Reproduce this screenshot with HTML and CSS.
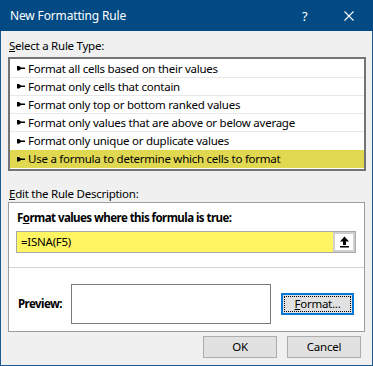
FILE: index.html
```html
<!DOCTYPE html>
<html>
<head>
<meta charset="utf-8">
<link rel="stylesheet" href="styles.css">
</head>
<body>
<div class="window">
  <div class="titlebar">
    <span class="title">New Formatting Rule</span>
    <span class="help">?</span>
    <svg class="close" width="10" height="10" viewBox="0 0 10 10"><path d="M0.5 0.5 L9.5 9.5 M9.5 0.5 L0.5 9.5" stroke="#fff" stroke-width="1.1" fill="none"/></svg>
  </div>
  <div class="content">
    <div class="label"><u>S</u>elect a Rule Type:</div>
    <div class="list">
      <div class="row"><svg class="pt" width="8" height="5" viewBox="0 0 8 5"><path d="M0 0 L2 0 L4 1.6 L8 1.6 L8 3 L4 3 L2 4.6 L0 4.6 Z" fill="#000"/></svg><span>Format all cells based on their values</span></div>
      <div class="row"><svg class="pt" width="8" height="5" viewBox="0 0 8 5"><path d="M0 0 L2 0 L4 1.6 L8 1.6 L8 3 L4 3 L2 4.6 L0 4.6 Z" fill="#000"/></svg><span>Format only cells that contain</span></div>
      <div class="row"><svg class="pt" width="8" height="5" viewBox="0 0 8 5"><path d="M0 0 L2 0 L4 1.6 L8 1.6 L8 3 L4 3 L2 4.6 L0 4.6 Z" fill="#000"/></svg><span>Format only top or bottom ranked values</span></div>
      <div class="row"><svg class="pt" width="8" height="5" viewBox="0 0 8 5"><path d="M0 0 L2 0 L4 1.6 L8 1.6 L8 3 L4 3 L2 4.6 L0 4.6 Z" fill="#000"/></svg><span>Format only values that are above or below average</span></div>
      <div class="row"><svg class="pt" width="8" height="5" viewBox="0 0 8 5"><path d="M0 0 L2 0 L4 1.6 L8 1.6 L8 3 L4 3 L2 4.6 L0 4.6 Z" fill="#000"/></svg><span>Format only unique or duplicate values</span></div>
      <div class="row selected"><svg class="pt" width="8" height="5" viewBox="0 0 8 5"><path d="M0 0 L2 0 L4 1.6 L8 1.6 L8 3 L4 3 L2 4.6 L0 4.6 Z" fill="#000"/></svg><span>Use a formula to determine which cells to format</span></div>
    </div>
    <div class="label label2"><u>E</u>dit the Rule Description:</div>
    <div class="desc">
      <div class="desc-top">
        <div class="bold">F<u>o</u>rmat values where this formula is true:</div>
        <div class="formula">
          <div class="formula-text">=ISNA(F5)</div>
          <div class="collapse"><div class="collapse-inner"><svg width="11" height="12" viewBox="0 0 11 12"><path d="M5.5 0.5 L10 5.5 L7 5.5 L7 9 L4 9 L4 5.5 L1 5.5 Z" fill="#000"/><rect x="1" y="10" width="9" height="1.5" fill="#000"/></svg></div></div>
        </div>
      </div>
      <div class="desc-bottom">
        <div class="bold preview-label">Preview:</div>
        <div class="preview"></div>
        <button class="btn focus"><span class="focus-rect"><u>F</u>ormat...</span></button>
      </div>
    </div>
    <div class="actions">
      <button class="btn">OK</button>
      <button class="btn">Cancel</button>
    </div>
  </div>
</div>
</body>
</html>
```

FILE: styles.css
```css
* { box-sizing: border-box; }
html, body { margin: 0; padding: 0; }
body {
  font-family: "Noto Sans", "Open Sans", sans-serif;
  font-size: 11.5px;
  letter-spacing: -0.25px;
  color: #000;
  background: #f0f0f0;
}
.window {
  width: 373px;
  height: 366px;
  border: 1px solid #1b5a93;
  border-top: none;
  background: #f0f0f0;
  display: flex;
  flex-direction: column;
}
.titlebar {
  height: 31px;
  background: #014a83;
  color: #fff;
  display: flex;
  align-items: center;
  margin: 0 -1px;
  padding-left: 10px;
}
.title {
  font-size: 12px;
  letter-spacing: -0.15px;
  flex: 1;
  line-height: 16px;
}
.help {
  font-size: 13px;
  width: 14px;
  margin-right: 28px;
}
.close {
  margin-right: 19px;
}
.content {
  padding: 7px 6px 0 7px;
  display: flex;
  flex-direction: column;
}
.label {
  line-height: 16px;
  height: 16px;
  margin-bottom: 3px;
  padding-left: 1px;
}
.label2 {
  margin-top: 15px;
  margin-bottom: 0;
}
.list {
  border: 2px solid #747474;
  background: #fff;
  padding: 1px 0 1px 0;
}
.row {
  height: 18px;
  border-bottom: 1px solid #e8e8e8;
  display: flex;
  align-items: center;
  padding-left: 7px;
  line-height: 16px;
}
.row:nth-child(5) { border-bottom: none; }
.row.selected {
  background: #e1d852;
  border-bottom: none;
  height: 18px;
}
.pt { margin-right: 3px; flex: none; }
.desc {
  border: 1px solid #9d9d9d;
  background: #fff;
  height: 130px;
  margin-right: 1px;
  display: flex;
  flex-direction: column;
}
.desc-top {
  padding: 7px 7px 0 7px;
  height: 65px;
  border-bottom: 1px solid #d4d4d4;
}
.bold {
  font-weight: bold;
  letter-spacing: -0.55px;
  line-height: 16px;
  padding-left: 1px;
}
.formula {
  margin-top: 5px;
  height: 22px;
  width: 340px;
  display: flex;
  border: 1px solid #a8a8a8;
}
.formula-text {
  flex: 1;
  background: #fff462;
  padding-left: 4px;
  line-height: 20px;
}
.collapse {
  width: 22px;
  background: #cfcfcf;
  padding: 2px;
}
.collapse-inner {
  background: #fff;
  height: 100%;
  display: flex;
  align-items: center;
  justify-content: center;
}
.desc-bottom {
  display: flex;
  align-items: center;
  padding: 16px 0 0 8px;
}
.preview-label {
  width: 54px;
}
.preview {
  width: 200px;
  height: 40px;
  border: 1px solid #7a7a7a;
  background: #fff;
  margin-right: 10px;
}
.btn {
  font-family: inherit;
  font-size: 11.5px;
  letter-spacing: -0.25px;
  width: 74px;
  height: 22px;
  border: 1px solid #adadad;
  background: #e1e1e1;
  color: #000;
  padding: 0;
  line-height: 18px;
}
.btn.focus {
  width: 73px;
  border: 2px solid #0078d7;
  padding: 1px;
}
.focus-rect {
  display: block;
  height: 100%;
  border: 1px dotted #000;
  line-height: 14px;
}
.actions {
  display: flex;
  justify-content: flex-end;
  gap: 10px;
  margin-top: 4px;
  padding-right: 5px;
}
```
